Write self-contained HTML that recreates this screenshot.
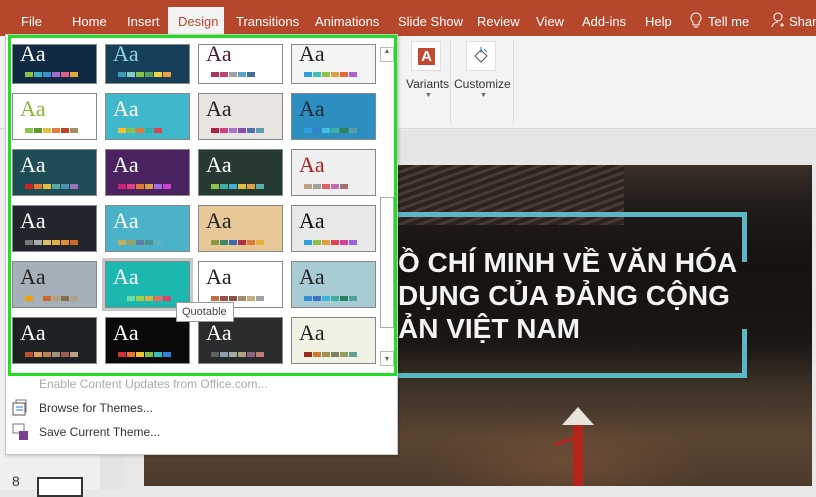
<!DOCTYPE html>
<html><head><meta charset="utf-8"><style>
*{margin:0;padding:0;box-sizing:border-box}
body{width:816px;height:490px;overflow:hidden;background:#e8e8e8;font-family:"Liberation Sans","DejaVu Sans",sans-serif;position:relative}
.tabs{position:absolute;left:0;top:0;width:816px;height:36px;background:#b7472a;color:#fff;font-size:13px;white-space:nowrap}
.tabs span{position:absolute;top:14px}
.design{position:absolute;left:168px;top:7px;width:56px;height:29px;background:#f3f3f3;color:#b7472a;font-size:13px;padding:7px 0 0 10px}
.ribbon{position:absolute;left:0;top:36px;width:816px;height:93px;background:#f3f3f3;border-bottom:1px solid #d8d8d8}
.grayband{position:absolute;left:0;top:130px;width:816px;height:35px;background:#e6e6e6}
.slide{position:absolute;left:144px;top:165px;width:668px;height:321px;overflow:hidden;
background:
radial-gradient(ellipse 140px 50px at 420px 300px,rgba(140,90,60,.45),transparent),
linear-gradient(180deg,#3a2e28 0%,#221c19 12%,#151210 30%,#1a1613 55%,#3b3026 68%,#5a4533 85%,#4b3a2c 100%)}
.roof{position:absolute;left:230px;top:0;width:250px;height:60px;background:repeating-linear-gradient(160deg,#4a3a33 0 3px,#2c231f 3px 7px)}
.panel{position:absolute;left:0;top:130px;width:124px;height:360px;background:#f0f0f0;border-right:1px solid #ccc}
.dd{position:absolute;left:5px;top:34px;width:393px;height:421px;background:#fff;border:1px solid #c6c6c6;box-shadow:1px 1px 3px rgba(0,0,0,.2)}
.green{position:absolute;left:8px;top:35px;width:389px;height:341px;border:3px solid #22dd22}
.t{position:absolute;width:85px;height:47px;border:1px solid #888;overflow:hidden;font-family:"Liberation Serif",serif;font-size:22px}
.t b{position:absolute;left:7px;top:2px;font-weight:normal}
.sw{position:absolute;left:12px;bottom:6px;display:flex;gap:1px}
.sw i{width:8px;height:5px;display:block}
.menu{position:absolute;font-size:12px;color:#333}
</style></head><body>
<div class="tabs">
<span style="left:21px">File</span><span style="left:72px">Home</span><span style="left:127px">Insert</span>
<span style="left:236px">Transitions</span><span style="left:315px">Animations</span><span style="left:398px">Slide Show</span>
<span style="left:477px">Review</span><span style="left:536px">View</span><span style="left:582px">Add-ins</span><span style="left:645px">Help</span>
<span style="left:690px;top:12px"><svg width="12" height="16"><path d="M6 1a5 5 0 0 0-3 9v3h6v-3a5 5 0 0 0-3-9zM4 15h4" fill="none" stroke="#fff"/></svg></span><span style="left:708px">Tell me</span>
<span style="left:771px;top:12px"><svg width="16" height="16"><circle cx="7" cy="5" r="4" fill="none" stroke="#fff"/><path d="M1 15c1-4 4-5 6-5M11 11v4M9 13h4" fill="none" stroke="#fff"/></svg></span><span style="left:789px">Share</span>
</div>
<div class="design">Design</div>
<div class="ribbon">
<div style="position:absolute;left:411px;top:5px;width:30px;height:30px;background:#fff;border:1px solid #ddd"><div style="margin:6px;width:17px;height:17px;background:#c2492d;color:#fff;font-weight:bold;font-size:15px;text-align:center;line-height:17px">A</div></div>
<div style="position:absolute;left:466px;top:5px;width:30px;height:30px;background:#fff;border:1px solid #ddd"><svg width="28" height="28"><path d="M8 14l6-6 6 6-6 6z" fill="none" stroke="#555"/><path d="M14 5v6M17 7l3 3" stroke="#3a79c0" fill="none"/></svg></div>
<div style="position:absolute;left:406px;top:41px;font-size:12px;color:#333">Variants</div>
<div style="position:absolute;left:454px;top:41px;font-size:12px;color:#333">Customize</div>
<div style="position:absolute;left:425px;top:56px;font-size:7px;color:#666">&#9660;</div>
<div style="position:absolute;left:480px;top:56px;font-size:7px;color:#666">&#9660;</div>
<div style="position:absolute;left:450px;top:4px;width:1px;height:84px;background:#ddd"></div>
<div style="position:absolute;left:513px;top:4px;width:1px;height:84px;background:#ddd"></div>
</div>
<div class="grayband"></div>
<div class="panel">
<div style="position:absolute;left:100px;top:0;width:24px;height:360px;background:#e4e4e4"></div>
<div style="position:absolute;left:12px;top:343px;font-size:14px;color:#333">8</div>
<div style="position:absolute;left:37px;top:347px;width:46px;height:20px;background:#fff;border:2px solid #333"></div>
<div style="position:absolute;left:37px;top:318px;width:46px;height:6px;border-bottom:2px solid #223"></div>
</div>
<div class="slide"><div class="roof"></div>
<div style="position:absolute;left:253px;top:47px;width:350px;height:5px;background:#5ab8c4"></div>
<div style="position:absolute;left:253px;top:208px;width:350px;height:5px;background:#5ab8c4"></div>
<div style="position:absolute;left:598px;top:47px;width:5px;height:50px;background:#5ab8c4"></div>
<div style="position:absolute;left:598px;top:164px;width:5px;height:49px;background:#5ab8c4"></div>
<div style="position:absolute;left:254px;top:81px;color:#f4f4f4;font-weight:bold;font-size:28px;line-height:33px;white-space:nowrap">Ồ CHÍ MINH VỀ VĂN HÓA<br>DỤNG CỦA ĐẢNG CỘNG<br>ẢN VIỆT NAM</div>
<div style="position:absolute;left:418px;top:242px;width:32px;height:18px;background:#e8e4dc;clip-path:polygon(50% 0,100% 100%,0 100%)"></div>
<div style="position:absolute;left:429px;top:260px;width:10px;height:62px;background:#b5231b"></div>
<div style="position:absolute;left:410px;top:275px;width:20px;height:3px;background:#b5231b;transform:rotate(-20deg)"></div>
</div>
<div class="dd">
<div style="position:absolute;left:374px;top:12px;width:14px;height:15px;border:1px solid #bbb;font-size:7px;color:#666;text-align:center">&#9650;</div>
<div style="position:absolute;left:374px;top:162px;width:14px;height:131px;border:1px solid #aaa"></div>
<div style="position:absolute;left:374px;top:316px;width:14px;height:15px;border:1px solid #bbb;font-size:7px;color:#666;text-align:center;line-height:15px">&#9660;</div>
<div class="menu" style="left:33px;top:342px;color:#aaa">Enable Content Updates from Office.com...</div>
<div class="menu" style="left:33px;top:366px">Browse for Themes...</div>
<div class="menu" style="left:33px;top:390px">Save Current Theme...</div>
<svg style="position:absolute;left:6px;top:364px" width="18" height="18"><rect x="4" y="1" width="10" height="12" fill="#fff" stroke="#777"/><rect x="1" y="4" width="12" height="12" fill="#fff" stroke="#555"/><path d="M4 8h7M4 11h7" stroke="#3a79c0"/></svg>
<svg style="position:absolute;left:6px;top:388px" width="18" height="18"><rect x="1" y="1" width="11" height="9" fill="#fff" stroke="#777"/><rect x="7" y="8" width="9" height="9" fill="#7a3d8f"/></svg>
</div>
<div class="green"></div>
<div id="g"></div>
<div style="position:absolute;left:176px;top:302px;width:58px;height:20px;background:#fff;border:1px solid #999;font-size:11px;color:#444;padding:3px 0 0 5px">Quotable</div>
<script>
var xs=[12,105,198,291],ys=[37,93,149,205,261,317];
var d=[
['#0f2a42','#fff','#8bc34a,#3fb1c6,#3a8fd1,#a66bd3,#e05c8a,#e0a83a'],
['#16405a','#8ed6e6','#3a9bb5,#7fd1c6,#8bc34a,#5aa05a,#f2d33a,#f2a03a'],
['#fff','#4a1a33','#a8385a,#c24070,#a0a0a0,#5aa5d0,#3a70a0'],
['#f4f4f4','#222','#2f9fe0,#3fc0b0,#8bc34a,#e0a040,#e06a3a,#b060d0'],
['#fff','#8ab438','#8bc34a,#5a9a2a,#e0c03a,#e0803a,#c0402a,#a09060'],
['#3fb8cc','#fff','#f2c030,#8bc34a,#e07a3a,#2fb0a0,#e04050'],
['#e8e4e0','#222','#b02040,#d04080,#b070d0,#8050b0,#5070b0,#5aa0b0'],
['#2d8fc0','#1a2a3a','#2fa0e0,#2f80d0,#3fc0e0,#3fb0a0,#2f8060,#5aa0a0'],
['#1f4d55','#fff','#d02020,#e07a3a,#e0c03a,#5aa5a0,#4a90b0,#a070c0'],
['#4a2360','#fff','#d02080,#e04080,#e07a3a,#e0a040,#a070e0,#d040d0'],
['#263a33','#fff','#8bc34a,#3fb0a0,#3fb0d0,#e0c040,#e0a040,#5ab0b0'],
['#f0f0f0','#b02020','#c0a080,#a0a0a0,#e06060,#c070b0,#a07070'],
['#22262c','#fff','#777,#aaa,#e0c060,#e0b040,#e09030,#d06a2a'],
['#4ab3c8','#fff','#c0b060,#a0a060,#6080a0,#509090,#60b0c0'],
['#e8c898','#222','#8a9a3a,#3a8a6a,#3a6ab0,#b03040,#e07a3a,#e0b040'],
['#e8e8e8','#111','#2fa0e0,#8bc34a,#e0a040,#e04050,#d040a0,#a060e0'],
['#a6b0b8','#222','#f0a000,#a6b0b8,#d06a2a,#b0a080,#807050,#b0a090'],
['#1cb8b0','#fff','#1cb8b0,#6ae0a0,#a0d050,#e0b040,#e07060,#e04060'],
['#fff','#222','#c07040,#a05040,#905040,#a09070,#c0b080,#a0a0a0'],
['#a8ccd4','#222','#2f8fd0,#3f70c0,#3fb0e0,#3fb0a0,#2f8060,#50a0a0'],
['#1e2124','#fff','#c0502a,#e0a060,#c08050,#a09080,#a06050,#c0a080'],
['#0a0a0a','#fff','#d03030,#f07030,#f0c030,#80c040,#30c0c0,#3080e0'],
['#2a2b2d','#fff','#606060,#90a0b0,#a0b0a0,#b0a080,#906080,#c08070'],
['#f0f2e4','#222','#a02a1a,#d07a2a,#a09050,#808060,#90a060,#60a090']];
var h='';
d.forEach(function(t,i){var c=i%4,r=Math.floor(i/4);var top=ys[r],hh=47;if(r==0){top=44;hh=40;}
var sw=t[2].split(',').map(function(x){return '<i style="background:'+x+'"></i>'}).join('');
var extra=i==17?'box-shadow:0 0 0 3px #c8c8c8;':'';
h+='<div class="t" style="left:'+xs[c]+'px;top:'+top+'px;height:'+hh+'px;background:'+t[0]+';color:'+t[1]+';'+extra+'"><b'+(r==0?' style="top:-4px"':'')+'>Aa</b><div class="sw">'+sw+'</div></div>';});
document.getElementById('g').innerHTML=h;
</script>
</body></html>
